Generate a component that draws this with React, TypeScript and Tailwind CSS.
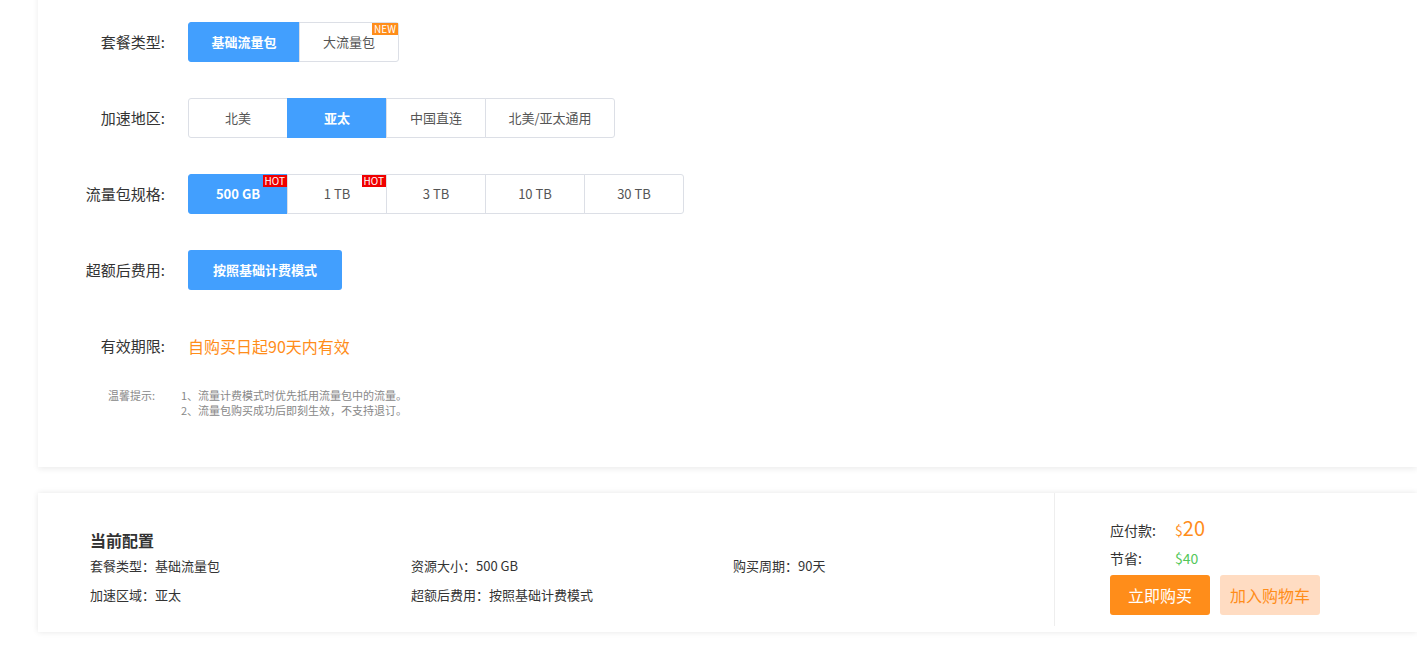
import React from "react";

const F = { fontFamily: '"Noto Sans CJK SC", "Noto Sans", sans-serif' };

function Seg({ items, widths, active, badges = {} }: { items: string[]; widths: number[]; active: number; badges?: Record<number, [string, string]> }) {
  return (
    <div className="flex">
      {items.map((t, i) => {
        const on = i === active;
        const first = i === 0, last = i === items.length - 1;
        return (
          <div
            key={t}
            style={{ width: widths[i] }}
            className={`relative h-10 flex items-center justify-center text-[13px] ${first ? "rounded-l-[3px]" : ""} ${last ? "rounded-r-[3px]" : ""} ${on ? "bg-[#429ffe] text-white font-bold border border-[#429ffe]" : "bg-white text-[#555] border border-[#dcdfe6]"} ${!first ? "-ml-px" : ""}`}
          >
            {t}
            {badges[i] && (
              <span className={`absolute top-0 right-0 text-[10px] leading-[12px] px-[2px] text-white font-normal ${badges[i][1]}`}>{badges[i][0]}</span>
            )}
          </div>
        );
      })}
    </div>
  );
}

function Row({ label, children }: { label: string; children: React.ReactNode }) {
  return (
    <div className="flex items-center h-10">
      <div className="w-[170px] text-right text-[15px] text-[#333] pr-[5px]">{label}</div>
      <div className="ml-[18px]">{children}</div>
    </div>
  );
}

export default function App() {
  return (
    <div style={F} className="w-[1417px] h-[661px] bg-white overflow-hidden">
      <div className="ml-[38px] -mt-[20px] bg-white shadow-[0_2px_6px_rgba(0,0,0,0.08)] h-[487px] pt-[42px]">
        <div className="flex flex-col gap-[36px] ml-[-38px]">
          <Row label="套餐类型:">
            <Seg items={["基础流量包", "大流量包"]} widths={[112, 100]} active={0} badges={{ 1: ["NEW", "bg-[#ff8d1a]"] }} />
          </Row>
          <Row label="加速地区:">
            <Seg items={["北美", "亚太", "中国直连", "北美/亚太通用"]} widths={[100, 100, 100, 130]} active={1} />
          </Row>
          <Row label="流量包规格:">
            <Seg items={["500 GB", "1 TB", "3 TB", "10 TB", "30 TB"]} widths={[100, 100, 100, 100, 100]} active={0} badges={{ 0: ["HOT", "bg-[#f00000]"], 1: ["HOT", "bg-[#f00000]"] }} />
          </Row>
          <Row label="超额后费用:">
            <div className="w-[154px] h-10 rounded-[3px] bg-[#429ffe] text-white font-bold text-[13px] flex items-center justify-center">按照基础计费模式</div>
          </Row>
          <Row label="有效期限:">
            <span className="text-[16px] text-[#ff8d1a]">自购买日起90天内有效</span>
          </Row>
        </div>
        <div className="flex text-[11px] text-[#888] leading-[15px] mt-[22px] ml-[70px]">
          <div className="w-[73px]">温馨提示:</div>
          <div>
            <div>1、流量计费模式时优先抵用流量包中的流量。</div>
            <div>2、流量包购买成功后即刻生效，不支持退订。</div>
          </div>
        </div>
      </div>
      <div className="ml-[38px] mt-[26px] bg-white shadow-[0_0_6px_rgba(0,0,0,0.1)] h-[139px] flex">
        <div className="w-[1017px] pl-[52px] pt-[35px] border-r border-[#eee] my-[6px] -mt-0">
          <div className="text-[16px] font-bold text-[#333] mt-[0px] pt-[0px]">当前配置</div>
          <div className="grid grid-cols-[321px_322px_200px] text-[13px] text-[#333] mt-[4px] gap-y-[10px] leading-[19px]">
            <div>套餐类型：基础流量包</div>
            <div>资源大小：500 GB</div>
            <div>购买周期：90天</div>
            <div>加速区域：亚太</div>
            <div>超额后费用：按照基础计费模式</div>
          </div>
        </div>
        <div className="pl-[55px] pt-[22px] text-[14px] text-[#333]">
          <div className="flex items-end h-[26px]">
            <span className="w-[65px]">应付款:</span>
            <span className="text-[#ff8d1a] text-[14px]">$</span>
            <span className="text-[#ff8d1a] text-[20px] leading-[26px]">20</span>
          </div>
          <div className="flex items-center h-[22px] mt-[6px]">
            <span className="w-[65px]">节省:</span>
            <span className="text-[#52c75a]">$40</span>
          </div>
          <div className="flex gap-[10px] mt-[6px]">
            <div className="w-[100px] h-10 rounded-[3px] bg-[#ff8d1a] text-white text-[16px] flex items-center justify-center">立即购买</div>
            <div className="w-[100px] h-10 rounded-[3px] bg-[#ffdcc2] text-[#ff8d1a] text-[16px] flex items-center justify-center">加入购物车</div>
          </div>
        </div>
      </div>
    </div>
  );
}
